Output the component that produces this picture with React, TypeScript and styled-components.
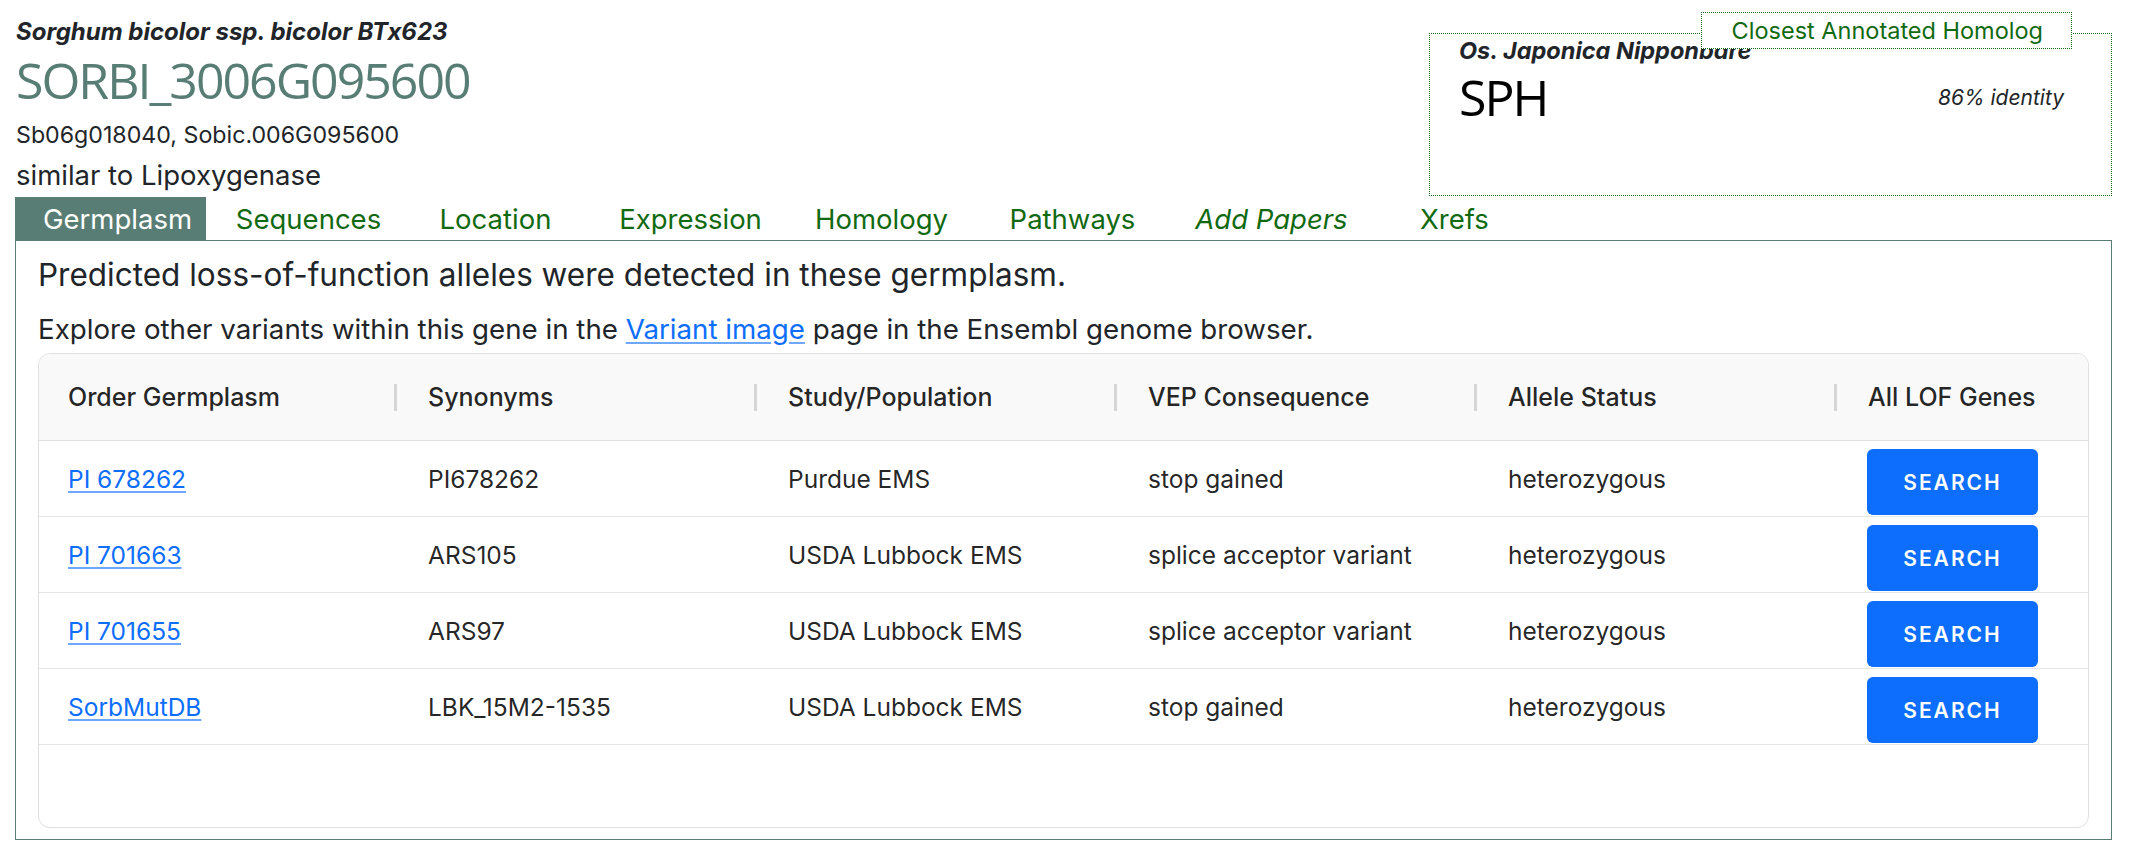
import React from "react";
import styled, { createGlobalStyle } from "styled-components";

const GlobalStyle = createGlobalStyle`
  html, body { margin: 0; padding: 0; background: #ffffff; }
  body { font-family: Inter, "Liberation Sans", sans-serif; color: #212529; }
  * { box-sizing: border-box; }
`;

const TEAL = "#587d74";
const GREEN = "#116a11";
const LINK = "#0d6efd";

const Page = styled.div`
  padding: 18px 36px 0 15px;
  width: 2148px;
`;

const TopRow = styled.div`
  display: flex;
  justify-content: space-between;
  align-items: flex-start;
`;

const GeneInfo = styled.div`
  display: flex;
  flex-direction: column;
  padding-left: 1px;
`;

const Species = styled.div`
  font-size: 24px;
  line-height: 28px;
  font-weight: 700;
  font-style: italic;
  color: #212529;
`;

const GeneTitle = styled.h1`
  margin: 4px 0 0 0;
  font-family: "Open Sans", "Noto Sans", sans-serif;
  font-weight: 400;
  font-size: 50px;
  line-height: 60px;
  letter-spacing: -2px;
  color: ${TEAL};
`;

const Synonyms = styled.div`
  margin-top: 10px;
  font-size: 23.2px;
  line-height: 30px;
`;

const Description = styled.div`
  margin-top: 9px;
  font-size: 27.5px;
  line-height: 32px;
`;

const HomologBox = styled.div`
  position: relative;
  margin-top: 15px;
  width: 683px;
  height: 163px;
  border: 1px dotted ${GREEN};
  padding: 4px 47px 0 29px;
`;

const HomologLegend = styled.div`
  position: absolute;
  top: -22px;
  right: 39px;
  height: 37px;
  padding: 0 28px 0 30px;
  display: flex;
  align-items: center;
  background: #ffffff;
  border: 1px dotted ${GREEN};
  color: ${GREEN};
  font-size: 23.5px;
`;

const HomologSpecies = styled.div`
  font-size: 23.5px;
  line-height: 26px;
  font-weight: 700;
  font-style: italic;
`;

const HomologRow = styled.div`
  margin-top: 3px;
  display: flex;
  justify-content: space-between;
  align-items: center;
`;

const HomologName = styled.div`
  font-family: "Open Sans", "Noto Sans", sans-serif;
  font-size: 50px;
  line-height: 60px;
  letter-spacing: -2px;
  color: #000000;
`;

const Identity = styled.div`
  font-size: 21px;
  font-style: italic;
  color: #212529;
`;

const TabBar = styled.div`
  display: flex;
  margin-top: 1px;
`;

const Tab = styled.div<{ $active?: boolean; $italic?: boolean; $nudge?: number }>`
  width: 191px;
  height: 43px;
  padding-left: ${(p) => 14 + (p.$nudge ?? 0)}px;
  display: flex;
  align-items: center;
  justify-content: center;
  font-size: 27.5px;
  white-space: nowrap;
  font-style: ${(p) => (p.$italic ? "italic" : "normal")};
  background: ${(p) => (p.$active ? TEAL : "transparent")};
  color: ${(p) => (p.$active ? "#ffffff" : GREEN)};
`;

const Panel = styled.div`
  border: 1px solid ${TEAL};
  padding: 15px 22px 11px 22px;
`;

const Lead = styled.div`
  font-size: 31.5px;
  line-height: 38px;
`;

const Note = styled.div`
  margin-top: 18px;
  font-size: 27.7px;
  line-height: 34px;
`;

const Link = styled.a`
  color: ${LINK};
  text-decoration: underline;
  text-decoration-color: rgba(13, 110, 253, 0.6);
  text-underline-offset: 3px;
  cursor: pointer;
`;

const Grid = styled.div`
  margin-top: 7px;
  border: 1px solid #e0e0e0;
  border-radius: 12px;
  overflow: hidden;
  color: rgba(0, 0, 0, 0.87);
`;

const HeaderRow = styled.div`
  display: grid;
  grid-template-columns: repeat(5, 360px) 1fr;
  height: 87px;
  background: #f9f9f9;
  border-bottom: 1px solid #e0e0e0;
`;

const HeaderCell = styled.div`
  display: flex;
  align-items: center;
  padding-left: 29px;
  font-size: 25px;
  font-weight: 500;
  white-space: nowrap;
`;

const HeaderLabel = styled.span`
  flex: 1;
`;

const Separator = styled.span`
  width: 3px;
  height: 27px;
  margin-right: 2px;
  background: #d6d6d6;
`;

const Row = styled.div`
  display: grid;
  grid-template-columns: repeat(5, 360px) 1fr;
  height: 76px;
  border-bottom: 1px solid #e6e6e6;
`;

const Cell = styled.div`
  display: flex;
  align-items: center;
  padding-left: 29px;
  font-size: 24.5px;
  white-space: nowrap;
`;

const ButtonCell = styled.div`
  display: flex;
  align-items: flex-start;
  padding: 8px 0 0 28px;
`;

const SearchButton = styled.button`
  width: 171px;
  height: 66px;
  border: none;
  border-radius: 6px;
  background: ${LINK};
  color: #ffffff;
  font-family: Inter, "Liberation Sans", sans-serif;
  font-size: 21px;
  font-weight: 600;
  letter-spacing: 2px;
  cursor: pointer;
`;

const Filler = styled.div`
  height: 82px;
`;

const tabs = [
  { label: "Germplasm", active: true },
  { label: "Sequences" },
  { label: "Location", nudge: -8 },
  { label: "Expression" },
  { label: "Homology" },
  { label: "Pathways" },
  { label: "Add Papers", italic: true, nudge: 16 },
  { label: "Xrefs" },
];

const columns = [
  "Order Germplasm",
  "Synonyms",
  "Study/Population",
  "VEP Consequence",
  "Allele Status",
  "All LOF Genes",
];

const rows = [
  ["PI 678262", "PI678262", "Purdue EMS", "stop gained", "heterozygous"],
  ["PI 701663", "ARS105", "USDA Lubbock EMS", "splice acceptor variant", "heterozygous"],
  ["PI 701655", "ARS97", "USDA Lubbock EMS", "splice acceptor variant", "heterozygous"],
  ["SorbMutDB", "LBK_15M2-1535", "USDA Lubbock EMS", "stop gained", "heterozygous"],
];

export default function App() {
  return (
    <>
      <GlobalStyle />
      <Page>
        <TopRow>
          <GeneInfo>
            <Species>Sorghum bicolor ssp. bicolor BTx623</Species>
            <GeneTitle>SORBI_3006G095600</GeneTitle>
            <Synonyms>Sb06g018040, Sobic.006G095600</Synonyms>
            <Description>similar to Lipoxygenase</Description>
          </GeneInfo>
          <HomologBox>
            <HomologSpecies>Os. Japonica Nipponbare</HomologSpecies>
            <HomologRow>
              <HomologName>SPH</HomologName>
              <Identity>86% identity</Identity>
            </HomologRow>
            <HomologLegend>Closest Annotated Homolog</HomologLegend>
          </HomologBox>
        </TopRow>
        <TabBar>
          {tabs.map((t) => (
            <Tab key={t.label} $active={t.active} $italic={t.italic} $nudge={t.nudge}>
              {t.label}
            </Tab>
          ))}
        </TabBar>
        <Panel>
          <Lead>Predicted loss-of-function alleles were detected in these germplasm.</Lead>
          <Note>
            Explore other variants within this gene in the <Link>Variant image</Link> page in the
            Ensembl genome browser.
          </Note>
          <Grid>
            <HeaderRow>
              {columns.map((c, i) => (
                <HeaderCell key={c}>
                  <HeaderLabel>{c}</HeaderLabel>
                  {i < columns.length - 1 && <Separator />}
                </HeaderCell>
              ))}
            </HeaderRow>
            {rows.map((r) => (
              <Row key={r[0]}>
                <Cell>
                  <Link>{r[0]}</Link>
                </Cell>
                <Cell>{r[1]}</Cell>
                <Cell>{r[2]}</Cell>
                <Cell>{r[3]}</Cell>
                <Cell>{r[4]}</Cell>
                <ButtonCell>
                  <SearchButton>SEARCH</SearchButton>
                </ButtonCell>
              </Row>
            ))}
            <Filler />
          </Grid>
        </Panel>
      </Page>
    </>
  );
}
